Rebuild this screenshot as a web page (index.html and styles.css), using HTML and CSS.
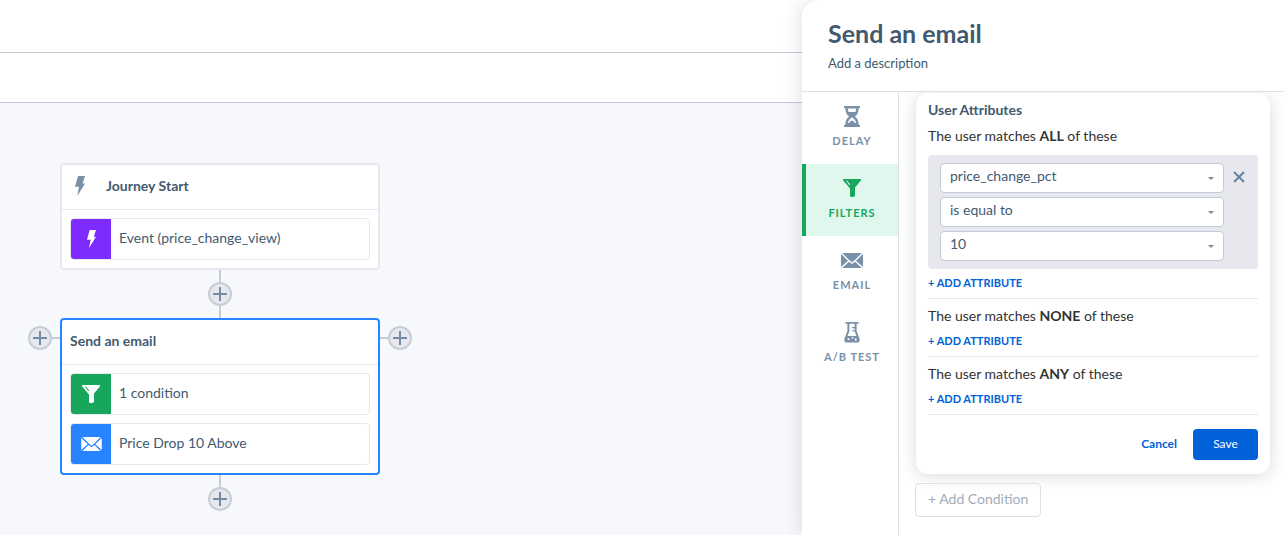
FILE: index.html
```html
<!DOCTYPE html>
<html lang="en">
  <head>
    <meta charset="UTF-8" />
    <meta name="viewport" content="width=device-width, initial-scale=1.0" />
    <title>Journey</title>
    <link rel="stylesheet" href="styles.css">
  </head>
  <body>
    <!-- shared icons -->
    <svg class="sprite" aria-hidden="true">
      <symbol id="bolt" viewBox="0 0 10 20">
        <path d="M3 0H10L7.5 7.5H10L2.3 20L4 10.8H0Z" />
      </symbol>
      <symbol id="funnel" viewBox="0 0 18 18">
        <path fill-rule="evenodd" d="M0 0H18V1.2L12 8.6V16.3Q12 18 10.3 18H8.5Q7 18 7 16.5V9.4L0 1.2ZM3 1.6L6.4 6.2L7.2 5.6L4 1.6Z" />
      </symbol>
      <symbol id="mail" viewBox="0 0 22 15">
        <path d="M1.2 0H20.8L13.6 7.2L11 9.3L8.4 7.2ZM0 1L7 7.7L0 14ZM22 1V14L15 7.7ZM1.2 15L8 8.7L11 11L14 8.7L20.8 15Z" />
      </symbol>
      <symbol id="plus" viewBox="0 0 14 14">
        <path d="M6 0H8V6H14V8H8V14H6V8H0V6H6Z" />
      </symbol>
    </svg>

    <div class="app">
      <main class="workspace">
        <div class="topbar"></div>
        <div class="toolbar"></div>

        <div class="canvas">
          <div class="journey">
            <section class="node">
              <h2 class="node-title">
                <svg class="start-icon"><use href="#bolt" /></svg>
                Journey Start
              </h2>
              <div class="node-body">
                <div class="step">
                  <span class="step-icon purple"><svg width="9" height="18"><use href="#bolt" /></svg></span>
                  <span class="step-name">Event (price_change_view)</span>
                </div>
              </div>
            </section>

            <span class="line"></span>
            <button class="add" type="button" aria-label="Add step"><svg><use href="#plus" /></svg></button>
            <span class="line"></span>

            <div class="node-row">
              <div class="branch">
                <button class="add" type="button" aria-label="Add branch left"><svg><use href="#plus" /></svg></button>
                <span class="side-line"></span>
              </div>
              <section class="node selected">
                <h2 class="node-title">Send an email</h2>
                <div class="node-body">
                  <div class="step">
                    <span class="step-icon green"><svg width="18" height="18"><use href="#funnel" /></svg></span>
                    <span class="step-name">1 condition</span>
                  </div>
                  <div class="step">
                    <span class="step-icon blue"><svg width="21" height="14"><use href="#mail" /></svg></span>
                    <span class="step-name">Price Drop 10 Above</span>
                  </div>
                </div>
              </section>
              <div class="branch">
                <span class="side-line"></span>
                <button class="add" type="button" aria-label="Add branch right"><svg><use href="#plus" /></svg></button>
              </div>
            </div>

            <span class="line"></span>
            <button class="add" type="button" aria-label="Add step at end"><svg><use href="#plus" /></svg></button>
          </div>
        </div>
      </main>

      <aside class="panel">
        <header class="panel-header">
          <h1>Send an email</h1>
          <p>Add a description</p>
        </header>

        <div class="panel-main">
          <nav class="tabs">
            <button class="tab" type="button">
              <svg width="16" height="22" viewBox="0 0 16 22">
                <path d="M0 0H16V2H0ZM0 19H16V21H0Z" />
                <path fill-rule="evenodd" d="M1.3 2H14.7C14.7 6 13.5 8.5 10.8 10.5C13.5 12.5 14.7 15 14.7 19H1.3C1.3 15 2.5 12.5 5.2 10.5C2.5 8.5 1.3 6 1.3 2ZM3.7 2.5C3.8 3.9 4.1 5 4.6 5.9H11.4C11.9 5 12.2 3.9 12.3 2.5ZM8 11.2C5.8 12.6 4.3 14.6 3.8 17H5C6 15.4 7 14.8 8 14.8C9 14.8 10 15.4 11 17H12.2C11.7 14.6 10.2 12.6 8 11.2Z" />
              </svg>
              DELAY
            </button>
            <button class="tab active" type="button">
              <svg width="18" height="22" viewBox="0 -1 18 22"><use href="#funnel" width="18" height="18" /></svg>
              FILTERS
            </button>
            <button class="tab" type="button">
              <svg width="22" height="22" viewBox="0 -3 22 22"><use href="#mail" width="22" height="15" /></svg>
              EMAIL
            </button>
            <button class="tab" type="button">
              <svg width="16" height="22" viewBox="0 0 16 22">
                <path fill-rule="evenodd" d="M1.5 0H14.5V1.7H12.6V9L15.5 16.5Q16.3 20.5 13 20.5H3Q-.3 20.5 .5 16.5L3.4 9V1.7H1.5ZM5.4 1.7V9.3L3.5 14H12.5L10.6 9.3H8V8.2H10.6V6.2H8V5.1H10.6V1.7ZM3.6 16.2V18H5.4V16.2ZM7.8 15V16.4H9.2V15ZM10.8 16.6V18.4H12.6V16.6Z" />
              </svg>
              A/B TEST
            </button>
          </nav>

          <div class="panel-content">
            <form class="card">
              <h3>User Attributes</h3>

              <div class="group">
                <p>The user matches <b>ALL</b> of these</p>
                <div class="rule">
                  <div class="fields">
                    <div class="select">
                      <select aria-label="Attribute"><option>price_change_pct</option></select>
                    </div>
                    <div class="select">
                      <select aria-label="Operator"><option>is equal to</option></select>
                    </div>
                    <div class="select">
                      <select aria-label="Value"><option>10</option></select>
                    </div>
                  </div>
                  <button class="remove" type="button" aria-label="Remove attribute">
                    <svg width="12" height="12" viewBox="0 0 12 12"><path d="M1 1L11 11M11 1L1 11" /></svg>
                  </button>
                </div>
                <button class="link" type="button">+ ADD ATTRIBUTE</button>
              </div>

              <div class="group">
                <p>The user matches <b>NONE</b> of these</p>
                <button class="link" type="button">+ ADD ATTRIBUTE</button>
              </div>

              <div class="group">
                <p>The user matches <b>ANY</b> of these</p>
                <button class="link" type="button">+ ADD ATTRIBUTE</button>
              </div>

              <div class="actions">
                <button class="cancel" type="button">Cancel</button>
                <button class="save" type="button">Save</button>
              </div>
            </form>

            <button class="add-condition" type="button">+ Add Condition</button>
          </div>
        </div>
      </aside>
    </div>
  </body>
</html>
```
FILE: styles.css
```css
* {
  box-sizing: border-box;
}

body {
  margin: 0;
  font-family: Lato, "Open Sans", sans-serif;
  font-size: 14px;
  line-height: 20px;
  color: #425a70;
  background-color: #fff;
}

h1,
h2,
h3,
p {
  margin: 0;
}

button,
select {
  font: inherit;
  color: inherit;
  cursor: pointer;
}

button {
  padding: 0;
  background: none;
  border: none;
}

svg {
  fill: currentColor;
}

.sprite {
  display: none;
}

.app {
  display: flex;
  min-height: 100vh;
}

/* workspace */
.workspace {
  flex: 1;
  display: flex;
  flex-direction: column;
}

.topbar {
  height: 53px;
  border-bottom: 1px solid #c6c9d6;
}

.toolbar {
  height: 50px;
  border-bottom: 1px solid #c6c9d6;
}

.canvas {
  flex: 1;
  padding: 60px 28px 24px;
  background-color: #f7f8fc;
}

.journey {
  display: flex;
  flex-direction: column;
  align-items: center;
  width: 384px;
}

.node {
  width: 320px;
  background-color: #fff;
  border: 2px solid #e7e8ee;
  border-radius: 4px;
}

.node.selected {
  border-color: #2684ff;
}

.node-title {
  display: flex;
  align-items: center;
  height: 45px;
  padding: 0 8px 2px;
  font-size: 14px;
  font-weight: 700;
  border-bottom: 1px solid #e7e8ee;
}

.start-icon {
  width: 10px;
  height: 20px;
  margin: 0 21px 0 5px;
  color: #7890a8;
}

.node-body {
  display: grid;
  gap: 8px;
  padding: 8px;
}

.step {
  display: flex;
  align-items: center;
  gap: 8px;
  height: 42px;
  border: 1px solid #e7e8ee;
  border-radius: 4px;
}

.step-name {
  padding-bottom: 2px;
}

.step-icon {
  display: grid;
  place-items: center;
  width: 40px;
  height: 40px;
  color: #fff;
  border-radius: 3px 0 0 3px;
}

.purple {
  background-color: #7d2bff;
}

.green {
  background-color: #17a65b;
}

.blue {
  background-color: #2684ff;
}

.line {
  width: 2px;
  height: 12px;
  background-color: #c6cdd7;
}

.add {
  display: grid;
  place-items: center;
  width: 24px;
  height: 24px;
  color: #6f8ba5;
  background-color: #e7e8ee;
  border: 2px solid #c6cdd7;
  border-radius: 50%;
}

.add svg {
  width: 14px;
  height: 14px;
}

.node-row,
.branch {
  display: flex;
}

.branch {
  align-items: center;
  height: 40px;
}

.side-line {
  width: 8px;
  height: 2px;
  background-color: #c6cdd7;
}

/* side panel */
.panel {
  position: relative;
  display: flex;
  flex-direction: column;
  width: 482px;
  background-color: #fff;
  border-top-left-radius: 16px;
  box-shadow: 0 0 20px rgba(40, 50, 80, 0.16);
}

.panel-header {
  height: 92px;
  padding: 18px 26px 0;
  border-bottom: 1px solid #dcdfe7;
}

.panel-header h1 {
  font-size: 25px;
  line-height: 30px;
}

.panel-header p {
  margin-top: 5px;
  font-size: 13px;
}

.panel-main {
  flex: 1;
  display: flex;
}

.tabs {
  width: 97px;
  border-right: 1px solid #dcdfe7;
}

.tab {
  display: flex;
  flex-direction: column;
  align-items: center;
  gap: 6px;
  width: 100%;
  height: 72px;
  padding-top: 14px;
  font-size: 11px;
  font-weight: 700;
  line-height: 14px;
  letter-spacing: 1px;
  color: #7890a8;
  border-left: 4px solid transparent;
}

.tab.active {
  color: #17a65b;
  background-color: #e0f7ed;
  border-left-color: #17a65b;
}

.panel-content {
  flex: 1;
  padding: 1px 14px 18px 17px;
  overflow: hidden;
}

.card {
  padding: 7px 12px 14px;
  background-color: #fff;
  border-radius: 12px;
  box-shadow: 0 2px 16px rgba(40, 50, 80, 0.18);
}

.card h3 {
  font-size: 14px;
}

.group {
  padding: 7px 0 5px;
  color: #333;
  border-bottom: 1px solid #e7e8ee;
}

.card h3 + .group {
  padding-top: 6px;
}

.rule {
  display: flex;
  gap: 9px;
  margin: 9px 0 4px;
  padding: 8px 12px;
  background-color: #e7e8ee;
  border-radius: 4px;
}

.fields {
  flex: 1;
  display: grid;
  gap: 4px;
}

.select {
  position: relative;
}

.select::after {
  content: "";
  position: absolute;
  top: 14px;
  right: 10px;
  border: 3px solid transparent;
  border-top-color: #888;
  pointer-events: none;
}

select {
  display: block;
  width: 100%;
  height: 30px;
  padding: 0 24px 4px 9px;
  color: #425a70;
  background-color: #fff;
  border: 1px solid #c6c9d6;
  border-radius: 4px;
  appearance: none;
}

.remove {
  width: 13px;
  height: 28px;
}

.remove svg {
  display: block;
  fill: none;
  stroke: #6483a0;
  stroke-width: 2;
}

.link {
  display: block;
  font-size: 11px;
  font-weight: 700;
  color: #0061d9;
}

.group p + .link {
  margin-top: 5px;
}

.actions {
  display: flex;
  justify-content: flex-end;
  align-items: center;
  gap: 16px;
  padding-top: 14px;
}

.cancel {
  padding-bottom: 2px;
  font-size: 12px;
  font-weight: 700;
  color: #0061d9;
}

.save {
  width: 65px;
  height: 31px;
  padding-bottom: 2px;
  font-size: 12px;
  color: #fff;
  background-color: #0061d9;
  border-radius: 4px;
}

.add-condition {
  height: 34px;
  margin: 9px 0 0 -1px;
  padding: 0 12px 2px;
  color: #a3abb7;
  border: 1px solid #dcdfe7;
  border-radius: 4px;
}
```
